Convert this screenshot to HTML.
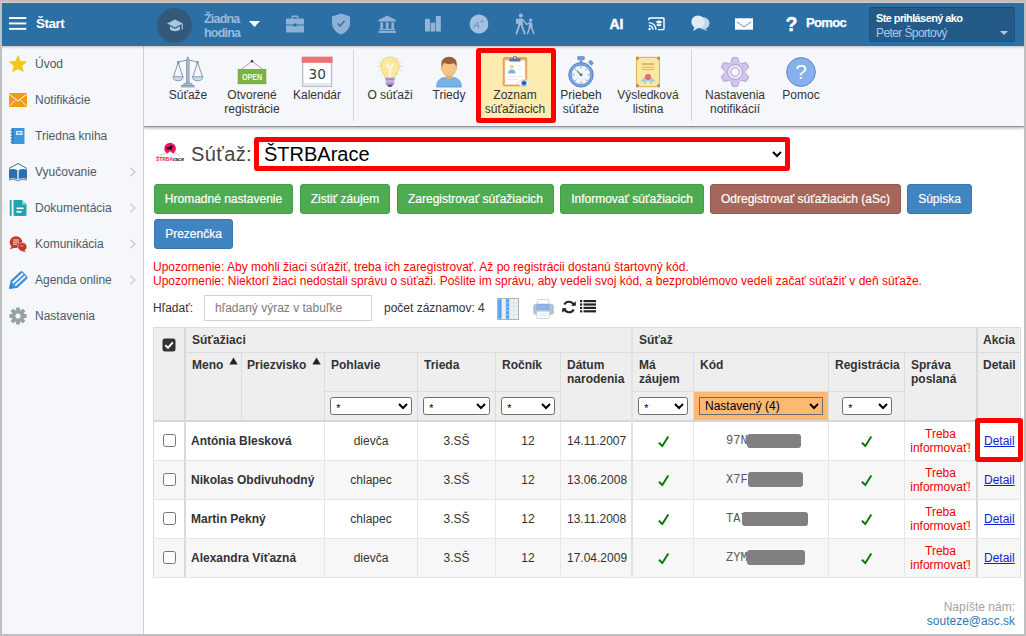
<!DOCTYPE html>
<html lang="sk">
<head>
<meta charset="utf-8">
<title>Zoznam súťažiacich</title>
<style>
*{box-sizing:border-box;margin:0;padding:0}
html,body{width:1026px;height:636px;overflow:hidden;background:#c0c0c0;font-family:"Liberation Sans",sans-serif;font-size:12px;color:#333}
.abs{position:absolute}
#frame{position:absolute;left:2px;top:3px;width:1022px;height:631px;background:#fff;overflow:hidden}
/* coordinates inside #frame are page coords minus (2,3) ; use wrapper to keep page coords */
#pg{position:absolute;left:-2px;top:-3px;width:1026px;height:636px}
#topbar{position:absolute;left:2px;top:3px;width:1022px;height:43px;background:#2c6fa5}
#side{position:absolute;left:2px;top:46px;width:142px;height:588px;background:#f5f7fa;border-right:1px solid #cfd3d8}
#tool{position:absolute;left:144px;top:46px;width:880px;height:81px;background:#f5f7fa;border-bottom:1px solid #8e959c;box-shadow:0 1px 3px rgba(0,0,0,.35);clip-path:inset(0 0 -8px 0)}
.sitem{position:absolute;left:35px;font-size:12px;color:#4f5968;white-space:nowrap;line-height:14px}
.sicon{position:absolute;left:8px;width:20px;height:20px}
.chev{position:absolute;left:129px;width:8px;height:10px}
.tl{position:absolute;text-align:center;font-size:12px;line-height:14px;color:#333;white-space:nowrap;transform:translateX(-50%)}
.ti{position:absolute;width:32px;height:32px;margin-left:-16px}
.tsep{position:absolute;top:50px;width:1px;height:71px;background:#d4d8dc}
.tb{position:absolute;color:#fff;font-weight:bold;white-space:nowrap}

.btn{-webkit-text-stroke:0.200px #fff;position:absolute;height:30px;border-radius:3px;color:#fff;font-size:12px;line-height:28px;text-align:center;white-space:nowrap;border:1px solid #449d48;background:#4eab52}
.btn.b{background:#4084c2;border-color:#3877b3}
.btn.r{background:#a5675b;border-color:#96594e}
.warn{position:absolute;left:153px;color:#f00;font-size:12px;line-height:14px;white-space:nowrap}
.ln{position:absolute;background:#dcdcdc}
.th{position:absolute;font-weight:bold;font-size:12px;line-height:14px;color:#333;white-space:nowrap}
.fs{position:absolute;height:18px;top:397px;font-family:"Liberation Sans",sans-serif;font-size:12px;border:1px solid #6e6e6e;border-radius:2.500px;background:#fff;color:#000;padding:1px 0 0 1px}
.fs.m{font-family:"Liberation Mono",monospace;font-size:11px;padding:4px 0 0 0}
.td{position:absolute;font-size:12px;line-height:14px;color:#333;white-space:nowrap}
.tc{text-align:center;transform:translateX(-50%)}
.cb{position:absolute;left:163px;width:13px;height:13px;border:1px solid #767676;border-radius:2.5px;background:#fff}
.code{position:absolute;left:726px;font-family:"Liberation Mono",monospace;font-size:12px;line-height:14px;color:#5a5a5a}
.red{position:absolute;background:#808080;border-radius:3px}
.ok{position:absolute;width:13px;height:13px}
.det{position:absolute;left:984px;font-size:12px;line-height:14px;color:#0b24d0;text-decoration:underline}
</style>
</head>
<body>
<div style="position:absolute;left:2px;top:2px;width:1022px;height:1px;background:#dcc6ca"></div>
<div id="frame"><div id="pg">

<!-- TOP BAR -->
<div id="topbar"></div>
<svg class="abs" style="left:9px;top:17px" width="18" height="14" viewBox="0 0 18 14"><g fill="#fff"><rect x="0" y="0.100" width="17.300" height="1.900"/><rect x="0" y="5.500" width="17.300" height="1.900"/><rect x="0" y="10.900" width="17.300" height="1.900"/></g></svg>
<div class="tb" style="left:36px;top:16px;font-size:13.500px;line-height:16px;letter-spacing:-0.5px">Štart</div>


<!-- class circle -->
<div class="abs" style="left:157px;top:8px;width:35px;height:35px;border-radius:50%;background:#33587a"></div>
<svg class="abs" style="left:166px;top:19px" width="18" height="14" viewBox="0 0 18 14"><path d="M9 0.5 L17 4.5 L9 8.5 L1 4.5 Z" fill="#a9c6e0"/><path d="M4 7.2 V10.5 C6 12.8 12 12.8 14 10.5 V7.2 L9 9.8 Z" fill="#a9c6e0"/><rect x="15.6" y="5" width="1.2" height="5.5" fill="#a9c6e0"/></svg>
<div class="abs" style="left:204px;top:13px;font-size:12.5px;line-height:13.5px;font-weight:bold;color:#98bbdc;letter-spacing:-0.8px">Žiadna<br>hodina</div>
<svg class="abs" style="left:249px;top:21px" width="11" height="6" viewBox="0 0 11 6"><path d="M0 0 H11 L5.5 6 Z" fill="#fff"/></svg>
<!-- briefcase -->
<svg class="abs" style="left:285px;top:15px" width="20" height="18" viewBox="0 0 20 18"><g fill="#8db2d6"><path d="M6.5 3.5 V1.8 Q6.5 0.5 7.8 0.5 H12.2 Q13.5 0.5 13.5 1.8 V3.5 H12 V2 H8 V3.5 Z"/><path d="M1 4.5 Q1 3.5 2 3.5 H18 Q19 3.5 19 4.5 V9.5 H11.5 V8.5 H8.5 V9.5 H1 Z"/><path d="M1 10.5 H8.5 V11.5 H11.5 V10.5 H19 V16.5 Q19 17.5 18 17.5 H2 Q1 17.5 1 16.5 Z"/></g></svg>
<!-- shield -->
<svg class="abs" style="left:331px;top:13px" width="20" height="22" viewBox="0 0 20 22"><path d="M10 0.5 L19 3.5 V10 C19 15.5 15 19.5 10 21.5 C5 19.5 1 15.5 1 10 V3.5 Z" fill="#8db2d6"/><path d="M6.5 10.5 L9 13 L13.5 8" fill="none" stroke="#2c6fa5" stroke-width="1.4"/></svg>
<!-- bank -->
<svg class="abs" style="left:378px;top:14.500px" width="18.400" height="18.400" viewBox="0 0 20 20"><g fill="#8db2d6"><path d="M10 0.5 L19.5 5.5 V7 H0.5 V5.5 Z"/><rect x="2.5" y="8" width="3" height="7"/><rect x="8.5" y="8" width="3" height="7"/><rect x="14.5" y="8" width="3" height="7"/><rect x="1.5" y="15" width="17" height="1.6"/><rect x="0.5" y="17.3" width="19" height="2.2"/></g></svg>
<!-- bars -->
<svg class="abs" style="left:424px;top:15px" width="18" height="18" viewBox="0 0 18 18"><g fill="#93b6d8"><rect x="1" y="3.900" width="4.900" height="12.600"/><rect x="6.600" y="7.700" width="4.600" height="8.800"/><rect x="11.900" y="1" width="4.900" height="15.500"/></g></svg>
<!-- A+ -->
<svg class="abs" style="left:469px;top:14px" width="20" height="20" viewBox="0 0 20 20"><circle cx="10" cy="10" r="9.4" fill="#a3c1de"/><text x="4.2" y="14" font-family="Liberation Sans, sans-serif" font-size="9.500" font-style="italic" fill="#4c83b6">A</text><text x="11" y="10" font-family="Liberation Sans, sans-serif" font-size="6.500" fill="#4c83b6">+</text></svg>
<!-- walking -->
<svg class="abs" style="left:514px;top:13px" width="22" height="22" viewBox="0 0 22 22"><g fill="#9dbcdb" stroke="#9dbcdb" stroke-linecap="round"><circle cx="6.8" cy="2.6" r="2" stroke="none"/><path d="M4.6 5.5 H8.4 L9 12 H4.2 Z" stroke="none"/><rect x="2" y="5.6" width="2.6" height="5.5" rx="1" stroke="none"/><path d="M5.4 12 L2.5 20.5" stroke-width="1.9" fill="none"/><path d="M7.6 12 L10.6 20.5" stroke-width="1.9" fill="none"/><path d="M8.6 6.5 L12.5 11.3" stroke-width="1.4" fill="none"/><circle cx="16.6" cy="7.2" r="1.6" stroke="none"/><path d="M15 9.5 H18.2 L18.6 14.5 H14.6 Z" stroke="none"/><path d="M15.6 14.5 L13.6 20.5" stroke-width="1.5" fill="none"/><path d="M17.6 14.5 L19.8 20.5" stroke-width="1.5" fill="none"/><path d="M15 10 L12.5 11.5" stroke-width="1.2" fill="none"/></g></svg>
<div class="tb" style="left:609.500px;top:15px;font-size:14px;line-height:18px;letter-spacing:-0.200px;-webkit-text-stroke:0.450px #fff">AI</div>
<!-- cast -->
<svg class="abs" style="left:648px;top:17px" width="17" height="14" viewBox="0 0 17 14"><path d="M0.800 3.300 V1.800 Q0.800 1 1.600 1 H15.200 Q16 1 16 1.800 V11.800 Q16 12.600 15.200 12.600 H10" fill="none" stroke="#fff" stroke-width="1.400"/><g fill="none" stroke="#fff" stroke-width="1.400"><path d="M0.800 5.600 Q7.600 6 7.900 12.800"/><path d="M0.800 8.500 Q4.700 8.900 5 12.800"/></g><circle cx="1.600" cy="12" r="1.200" fill="#fff"/><path d="M11 3.200 L14.600 5 L11 6.800 L7.400 5 Z" fill="#fff"/><path d="M8.800 6.400 V8.400 Q11 10 13.200 8.400 V6.400 L11 7.600 Z" fill="#fff"/></svg>
<!-- chat -->
<svg class="abs" style="left:691px;top:15px" width="19" height="17" viewBox="0 0 19 17"><ellipse cx="12.200" cy="8.300" rx="6.300" ry="6" fill="#c2d6e9"/><path d="M13.500 12.500 L16.800 16.300 L10.500 13.500 Z" fill="#c2d6e9"/><ellipse cx="7" cy="6.800" rx="6.700" ry="6.300" fill="#e2ecf6"/><path d="M3.600 11.500 L2.200 16 L8 12.600 Z" fill="#e2ecf6"/></svg>
<!-- mail -->
<svg class="abs" style="left:735px;top:18px" width="18" height="12" viewBox="0 0 18 12"><rect x="0" y="0.300" width="18" height="11.400" fill="#fff"/><path d="M1.800 3.800 Q5 6 7.500 8 Q9 9.200 10.500 8 Q13 6 16.200 3.800" fill="none" stroke="#3a78ad" stroke-width="0.800"/></svg>
<div class="tb" style="left:785.500px;top:13px;font-size:19.500px;line-height:22px;-webkit-text-stroke:0.450px #fff">?</div>
<div class="tb" style="left:806px;top:15px;font-size:13px;line-height:16px;letter-spacing:-0.650px;-webkit-text-stroke:0.250px #fff">Pomoc</div>
<!-- user box -->
<div class="abs" style="left:869px;top:7px;width:146px;height:35px;border-radius:2px;background:#245a88;border:1px solid #22547f;border-top-color:#1d4871"></div>
<div class="tb" style="left:876px;top:11px;font-size:11px;line-height:14px;letter-spacing:-0.6px">Ste prihlásený ako</div>
<div class="abs" style="left:876px;top:26px;font-size:12px;line-height:15px;color:#a9c8ea;letter-spacing:-0.6px;white-space:nowrap">Peter Športový</div>
<svg class="abs" style="left:1000px;top:31px" width="8" height="4" viewBox="0 0 8 4"><path d="M0 0 H8 L4 4 Z" fill="#b4c7da"/></svg>

<!-- SIDEBAR -->
<div id="side"></div>
<div class="sitem" style="top:57px">Úvod</div>
<div class="sitem" style="top:93px">Notifikácie</div>
<div class="sitem" style="top:129px">Triedna kniha</div>
<div class="sitem" style="top:165px">Vyučovanie</div>
<div class="sitem" style="top:201px">Dokumentácia</div>
<div class="sitem" style="top:237px">Komunikácia</div>
<div class="sitem" style="top:273px">Agenda online</div>
<div class="sitem" style="top:309px">Nastavenia</div>


<svg class="sicon" style="top:54px" viewBox="0 0 20 20"><path d="M10 1 L12.600 7 L19.200 7.600 L14.200 11.900 L15.700 18.300 L10 14.900 L4.300 18.300 L5.800 11.900 L0.800 7.600 L7.400 7 Z" fill="#f5c518"/></svg>
<svg class="sicon" style="top:90px" viewBox="0 0 20 20"><rect x="1" y="3" width="18" height="14" fill="#f39c12"/><path d="M1 4 L10 11 L19 4" fill="none" stroke="#fff" stroke-width="1"/><path d="M1 16.500 L7.500 10 M19 16.500 L12.500 10" fill="none" stroke="#fff" stroke-width="0.800"/></svg>
<svg class="sicon" style="top:126px" viewBox="0 0 20 20"><rect x="4.500" y="2" width="12" height="16" rx="1" fill="#3e97dc"/><rect x="3.500" y="2" width="2" height="16" fill="#2f7fc0"/><g stroke="#2f7fc0" stroke-width="0.800"><path d="M2.500 4.500 H4.500 M2.500 7.500 H4.500 M2.500 10.500 H4.500 M2.500 13.500 H4.500 M2.500 16 H4.500"/></g><rect x="8" y="5" width="6.500" height="4" fill="#d6eafb"/><rect x="9.200" y="6.300" width="4" height="1.200" fill="#3e97dc"/></svg>
<svg class="sicon" style="top:162px" viewBox="0 0 20 20"><path d="M1 6.500 L10 1.500 L19 6.500" fill="none" stroke="#2f6fa8" stroke-width="1"/><path d="M1 7.500 Q6 6 9.300 8.300 V17.500 Q6 15.500 1 16.800 Z" fill="#2f6fa8"/><path d="M19 7.500 Q14 6 10.700 8.300 V17.500 Q14 15.500 19 16.800 Z" fill="#2f6fa8"/><path d="M1 17.800 Q6 16.500 10 18.800 Q14 16.500 19 17.800" fill="none" stroke="#2f6fa8" stroke-width="0.800"/></svg>
<svg class="sicon" style="top:198px" viewBox="0 0 20 20"><rect x="1.800" y="2" width="1.800" height="16" fill="#1fa5b0"/><path d="M5.500 2 H14 L18.500 6.500 V16.500 Q18.500 18 17 18 H7 Q5.500 18 5.500 16.500 Z" fill="#1fa5b0"/><path d="M14 2 V6.500 H18.500 Z" fill="#8fd6dc"/><rect x="8.500" y="9.500" width="7" height="1.600" fill="#fff"/><rect x="8.500" y="13" width="5" height="1.600" fill="#fff"/></svg>
<svg class="sicon" style="top:234px" viewBox="0 0 20 20"><ellipse cx="8" cy="8.200" rx="6.300" ry="5.900" fill="#c0392b"/><path d="M3.800 12 L1.800 15.200 L7.500 13.600 Z" fill="#c0392b"/><ellipse cx="14.300" cy="12.800" rx="4.600" ry="4.200" fill="#c0392b" stroke="#f5f7fa" stroke-width="0.500"/><path d="M15.500 15.500 L18.300 18.300 L12.500 16.800 Z" fill="#c0392b"/><g stroke="#fff" stroke-width="0.900"><path d="M5 6 H11 M5 8.100 H11 M5 10.200 H9"/></g><path d="M12.300 12 H15.500" stroke="#fff" stroke-width="0.600"/></svg>
<svg class="sicon" style="top:270px" viewBox="0 0 20 20"><g transform="translate(1.200 18.700) rotate(-43)"><path d="M0 0 L6.500 -5 H19.500 Q21.500 -5 21.500 -3 V3 Q21.500 5 19.500 5 H6.500 Z" fill="#3f90da"/><path d="M6.500 -1.800 H20.400 M6.500 1.800 H20.400" stroke="#f5f7fa" stroke-width="1.900" fill="none"/><path d="M0 0 L3.400 -2.600 V2.600 Z" fill="#2f7fca"/></g></svg>
<svg class="sicon" style="top:306px" viewBox="0 0 20 20"><g transform="translate(10 10)"><g fill="#95a2a5"><rect id="sg" x="-1.900" y="-8.600" width="3.800" height="4.500" rx="0.600"/><use href="#sg" transform="rotate(45)"/><use href="#sg" transform="rotate(90)"/><use href="#sg" transform="rotate(135)"/><use href="#sg" transform="rotate(180)"/><use href="#sg" transform="rotate(225)"/><use href="#sg" transform="rotate(270)"/><use href="#sg" transform="rotate(315)"/></g><circle r="6.200" fill="#95a2a5"/><circle r="2.600" fill="#f5f7fa"/></g></svg>
<svg class="chev" style="top:167px" viewBox="0 0 8 10"><path d="M1.500 0.800 L6 5 L1.500 9.200" fill="none" stroke="#c3c8ce" stroke-width="1.200"/></svg>
<svg class="chev" style="top:203px" viewBox="0 0 8 10"><path d="M1.500 0.800 L6 5 L1.500 9.200" fill="none" stroke="#c3c8ce" stroke-width="1.200"/></svg>
<svg class="chev" style="top:239px" viewBox="0 0 8 10"><path d="M1.500 0.800 L6 5 L1.500 9.200" fill="none" stroke="#c3c8ce" stroke-width="1.200"/></svg>
<svg class="chev" style="top:275px" viewBox="0 0 8 10"><path d="M1.500 0.800 L6 5 L1.500 9.200" fill="none" stroke="#c3c8ce" stroke-width="1.200"/></svg>

<!-- TOOLBAR -->
<div id="tool"></div>
<div class="abs" style="left:2px;top:46px;width:1022px;height:3px;background:linear-gradient(rgba(0,0,0,.18),rgba(0,0,0,0))"></div>
<!-- selected bg -->
<div class="abs" style="left:476px;top:48px;width:80px;height:75px;border:5px solid #f00;border-radius:3px;background:#fdecb0"></div>
<div class="tsep" style="left:353px"></div>
<div class="tsep" style="left:691px"></div>

<!-- scales -->
<svg class="ti" style="left:188px;top:56px" viewBox="0 0 34 34"><g fill="none" stroke="#7d8fa3" stroke-width="1"><path d="M6.600 6.700 Q16.800 2.300 27.200 6.700"/><path d="M6.600 6.700 L1.600 22 M6.600 6.700 L11.400 22"/><path d="M27.200 6.700 L22.200 22 M27.200 6.700 L32.400 22"/></g><path d="M15.400 4 L16.800 0.800 L18.200 4 L18.100 29 H15.500 Z" fill="#a9bbd0" stroke="#7d8fa3" stroke-width="0.800"/><path d="M11.300 32 Q12 28.800 14.800 28.600 H18.800 Q21.600 28.800 22.300 32 Z" fill="#a9bbd0" stroke="#7d8fa3" stroke-width="0.800"/><rect x="10" y="31.400" width="13.600" height="1.600" fill="#a9bbd0" stroke="#7d8fa3" stroke-width="0.600"/><path d="M1 22 H12 Q11.400 26.300 6.500 26.300 Q1.600 26.300 1 22 Z" fill="#c5def7" stroke="#7d8fa3" stroke-width="0.900"/><path d="M21.600 22 H33 Q32.400 26.300 27.300 26.300 Q22.200 26.300 21.600 22 Z" fill="#c5def7" stroke="#7d8fa3" stroke-width="0.900"/><rect x="5.400" y="5.500" width="2.400" height="2.400" fill="#7d8fa3"/><rect x="26" y="5.500" width="2.400" height="2.400" fill="#7d8fa3"/></svg>
<div class="tl" style="left:188px;top:88px">Súťaže</div>

<!-- open sign -->
<svg class="ti" style="left:252px;top:56px" viewBox="0 0 34 34"><path d="M5.500 14.300 L17 5.500 L28.500 14.300" fill="none" stroke="#b08b7b" stroke-width="0.900"/><circle cx="17" cy="5.500" r="1.300" fill="#333"/><rect x="2.300" y="14.300" width="29.400" height="15.200" fill="#7cb342" stroke="#6a9e35" stroke-width="0.800"/><text x="17" y="25.600" text-anchor="middle" font-family="Liberation Sans, sans-serif" font-size="9.600" font-weight="bold" fill="#f4faea" textLength="21.500" lengthAdjust="spacingAndGlyphs">OPEN</text></svg>
<div class="tl" style="left:252px;top:88px">Otvorené<br>registrácie</div>

<!-- calendar -->
<svg class="ti" style="left:317px;top:56px" viewBox="0 0 34 34"><rect x="1.800" y="1.800" width="30.600" height="30.400" fill="#fff" stroke="#b4c0cc" stroke-width="1.500"/><rect x="1" y="1" width="32.200" height="6.200" fill="#ef6f73" stroke="#dd8a8c" stroke-width="0.600"/><rect x="2.500" y="28.800" width="29.200" height="2.800" fill="#dfe8f0"/><text x="17.200" y="24.200" text-anchor="middle" font-family="DejaVu Sans, Liberation Sans, sans-serif" font-size="14.500" fill="#2f3e50">30</text></svg>
<div class="tl" style="left:317px;top:88px">Kalendár</div>

<!-- bulb -->
<svg class="ti" style="left:390px;top:56px" viewBox="0 0 34 34"><g stroke="#e3c662" stroke-width="1" stroke-dasharray="1.200 1.100" fill="none"><path d="M8.500 2 L10 4"/><path d="M25.500 2 L24 4"/><path d="M4.800 6 L7 7.200"/><path d="M29.200 6 L27 7.200"/><path d="M3.500 10.800 H6.300"/><path d="M27.700 10.800 H30.500"/><path d="M4.800 15.800 L7 14.800"/><path d="M29.200 15.800 L27 14.800"/><path d="M8 20.200 L9.300 18.800"/><path d="M26 20.200 L24.700 18.800"/></g><path d="M17 1.200 C10.300 1.200 7.200 6 7.200 10.500 C7.200 15.500 10.800 18.500 12 23.200 H22 C23.200 18.500 26.800 15.500 26.800 10.500 C26.800 6 23.700 1.200 17 1.200 Z" fill="#fbe89c" stroke="#e3c662" stroke-width="0.800"/><path d="M12.800 8.200 Q14.800 7 17 10.600 Q19.200 7 21.200 8.200 Q21.800 10.800 18.400 12.800 V22.800 H15.600 V12.800 Q12.200 10.800 12.800 8.200 Z" fill="#fdf6d3"/><rect x="12" y="23.200" width="10" height="2.600" fill="#a693cc"/><rect x="12.300" y="25.800" width="9.400" height="2.400" fill="#bbabdb"/><rect x="12.600" y="28.200" width="8.800" height="2.400" fill="#a693cc"/><path d="M13.800 30.600 H20.200 Q19.600 33 17 33 Q14.400 33 13.800 30.600 Z" fill="#4e4a60"/></svg>
<div class="tl" style="left:390px;top:88px">O súťaži</div>

<!-- person -->
<svg class="ti" style="left:449px;top:56px" viewBox="0 0 34 34"><path d="M3.800 33 Q4 24.500 11.500 22.800 L17 24.200 L22.500 22.800 Q30 24.500 30.200 33 Z" fill="#75b2ea" stroke="#5a9ad8" stroke-width="0.800"/><path d="M13.400 19 H20.600 V23 Q17 26.300 13.400 23 Z" fill="#e6ae68"/><ellipse cx="17" cy="13.200" rx="7.300" ry="8.600" fill="#f5c585" stroke="#d9a562" stroke-width="0.600"/><circle cx="9.600" cy="14" r="1.500" fill="#f5c585"/><circle cx="24.400" cy="14" r="1.500" fill="#f5c585"/><path d="M9.300 13 Q6.800 1.500 17 0.800 Q27.500 1.500 24.700 13 Q24.300 8.800 22 7.800 Q16.500 9.800 11.800 7.200 Q9.800 9 9.300 13 Z" fill="#9a5f40"/></svg>
<div class="tl" style="left:449px;top:88px">Triedy</div>

<!-- clipboard + eye -->
<svg class="ti" style="left:516px;top:55px;width:34px;height:34px;margin-left:-17px" viewBox="0 0 34 34"><rect x="4.200" y="2.600" width="23.500" height="28.300" rx="1.500" fill="#eaa868" stroke="#cf9152" stroke-width="0.700"/><rect x="6" y="5.200" width="20" height="24.200" fill="#fff" stroke="#ecdcc8" stroke-width="0.500"/><path d="M10.400 6.600 V3.400 H13.400 Q13.900 0.700 15.900 0.700 Q17.900 0.700 18.400 3.400 H21.400 V6.600 Z" fill="#5d7596"/><circle cx="15.900" cy="2.800" r="1" fill="#e4ebf3"/><circle cx="12.700" cy="11.800" r="2" fill="#f2d27e"/><path d="M9 18.600 Q9 14.400 12.700 14.400 Q16.500 14.400 16.500 18.600 Z" fill="#78b4ea"/><g stroke="#e3e8ee" stroke-width="0.900"><path d="M18.500 11 H24"/><path d="M18.500 14 H24"/><path d="M8.500 21.500 H24"/><path d="M8.500 24.500 H19"/></g><path d="M18.100 28.200 Q25 20.600 31.600 28.200 Q25 35 18.100 28.200 Z" fill="#fff" stroke="#dccfae" stroke-width="0.700"/><circle cx="25" cy="28.100" r="2.900" fill="#5b96db"/><circle cx="25" cy="28.100" r="1.400" fill="#23446e"/></svg>
<div class="tl" style="left:515px;top:88px">Zoznam<br>súťažiacich</div>

<!-- stopwatch -->
<svg class="ti" style="left:581px;top:56px" viewBox="0 0 34 34"><rect x="13.400" y="0.600" width="7.200" height="3.400" rx="0.700" fill="#6f9bdc" stroke="#4f7dbd" stroke-width="0.600"/><rect x="15.600" y="3.800" width="2.800" height="2.800" fill="#6f9bdc"/><rect x="25.300" y="5.400" width="4.600" height="3.400" rx="0.700" transform="rotate(45 27.600 7.100)" fill="#6f9bdc" stroke="#4f7dbd" stroke-width="0.500"/><circle cx="17" cy="20" r="13" fill="#79a7e3" stroke="#4f7dbd" stroke-width="1"/><circle cx="17" cy="20" r="10.300" fill="#eef4fb" stroke="#4f7dbd" stroke-width="0.700"/><g stroke="#6d7f95" stroke-width="0.900"><path d="M17 10.800 V13"/><path d="M17 27 V29.200"/><path d="M7.800 20 H10"/><path d="M24 20 H26.200"/><path d="M10.500 13.500 L12 15"/><path d="M23.500 13.500 L22 15"/><path d="M10.500 26.500 L12 25"/><path d="M23.500 26.500 L22 25"/></g><path d="M17 20 L12.600 15.600" stroke="#5b6b80" stroke-width="1.100" fill="none"/><circle cx="17" cy="20" r="1.500" fill="#4f6a92"/></svg>
<div class="tl" style="left:581px;top:88px">Priebeh<br>súťaže</div>

<!-- certificate -->
<svg class="ti" style="left:648px;top:56px" viewBox="0 0 34 34"><rect x="4.800" y="1.400" width="24.400" height="31.200" fill="#fbe8a0" stroke="#d6ab4e" stroke-width="1"/><g fill="#b98d3a"><rect x="4.300" y="0.900" width="3" height="3"/><rect x="26.700" y="0.900" width="3" height="3"/><rect x="4.300" y="30.100" width="3" height="3"/><rect x="26.700" y="30.100" width="3" height="3"/></g><g stroke="#d4ab52"><path d="M10.500 8.500 H23.500" stroke-width="1.600"/><path d="M10.500 12 H23.500" stroke-width="0.900"/><path d="M10.500 14.400 H23.500" stroke-width="0.900"/></g><path d="M14.500 22.500 L9.800 26.200 L12.800 26.800 L13.500 29.600 L17.200 24.500 Z" fill="#a6d0f0" stroke="#7fb3e0" stroke-width="0.500"/><path d="M19.500 22.500 L24.200 26.200 L21.200 26.800 L20.500 29.600 L16.800 24.500 Z" fill="#a6d0f0" stroke="#7fb3e0" stroke-width="0.500"/><circle cx="17" cy="22.300" r="3" fill="#ea6a6e" stroke="#d65a5e" stroke-width="0.500"/></svg>
<div class="tl" style="left:648px;top:88px">Výsledková<br>listina</div>

<!-- gear -->
<svg class="ti" style="left:735px;top:56px" viewBox="0 0 34 34"><g transform="translate(17 17)"><g fill="#cfc5ea" stroke="#a898d2" stroke-width="0.900"><path id="gt" d="M-3 -14.700 Q-3.200 -15.300 -2.400 -15.300 H2.400 Q3.200 -15.300 3 -14.700 L4.600 -9.500 H-4.600 Z"/><use href="#gt" transform="rotate(60)"/><use href="#gt" transform="rotate(120)"/><use href="#gt" transform="rotate(180)"/><use href="#gt" transform="rotate(240)"/><use href="#gt" transform="rotate(300)"/></g><circle r="11.200" fill="#cfc5ea"/><circle r="8" fill="#ece7f8" stroke="#9f8fcc" stroke-width="0.800"/><circle r="4.400" fill="#fafafd" stroke="#9f8fcc" stroke-width="0.900"/></g></svg>
<div class="tl" style="left:735px;top:88px">Nastavenia<br>notifikácií</div>

<!-- help -->
<svg class="ti" style="left:801px;top:56px" viewBox="0 0 34 34"><circle cx="17" cy="17" r="15.300" fill="#86afeb" stroke="#5a88cf" stroke-width="1"/><text x="17" y="24.500" text-anchor="middle" font-family="Liberation Sans, sans-serif" font-size="22" fill="#fff">?</text></svg>
<div class="tl" style="left:801px;top:88px">Pomoc</div>


<!-- CONTENT -->
<svg class="abs" style="left:155px;top:142px" width="31" height="20" viewBox="0 0 31 20"><circle cx="15.100" cy="6.500" r="5.800" fill="#e9165f"/><path transform="translate(0 0.700)" d="M11.200 5.800 L13 4.200 L14 5 L15 3.400 L15.200 1.600 L15.600 3.600 L18.200 3 L16.800 5.600 L16 8 L15.200 6.400 L13 6.800 L12 6.200 Z" fill="#111"/><path transform="translate(0 0.600)" d="M3.500 14.500 L9 10.800 L11.500 11.300 L15.200 8.600 L18 11 L20.800 10.200 L25.500 14.500 Z" fill="#fff"/><path transform="translate(0 0.600)" d="M4.500 13.600 L9 10.800 L11.500 11.300 L15.200 8.600 L18 11 L20.800 10.200 L24.500 13.600" fill="none" stroke="#9a9a9a" stroke-width="0.500"/><text x="1" y="18.600" font-family="Liberation Sans, sans-serif" font-size="6.200" font-weight="bold" fill="#e9165f" textLength="17" lengthAdjust="spacingAndGlyphs">ŠTRBA</text><text x="18" y="18.600" font-family="Liberation Sans, sans-serif" font-size="6.200" font-weight="bold" font-style="italic" fill="#1a1a1a" textLength="11" lengthAdjust="spacingAndGlyphs">race</text></svg>
<div class="abs" style="left:191px;top:142px;font-size:20px;line-height:24px;color:#444;white-space:nowrap;letter-spacing:0.4px">Súťaž:</div>
<select class="abs" style="left:254px;top:137px;width:536px;height:34px;border:5px solid #f00;border-radius:3px;font-family:'Liberation Sans',sans-serif;font-size:20px;color:#000;background:#fff;padding:0 0 0 1px"><option>ŠTRBArace</option></select>

<div class="btn " style="left:154px;top:184px;width:139px">Hromadné nastavenie</div>
<div class="btn " style="left:300px;top:184px;width:90px">Zistiť záujem</div>
<div class="btn " style="left:397px;top:184px;width:157px">Zaregistrovať súťažiacich</div>
<div class="btn " style="left:560px;top:184px;width:144px">Informovať súťažiacich</div>
<div class="btn r" style="left:710px;top:184px;width:191px">Odregistrovať súťažiacich (aSc)</div>
<div class="btn b" style="left:907px;top:184px;width:65px">Súpiska</div>
<div class="btn b" style="left:154px;top:219px;width:79px">Prezenčka</div>
<div class="warn" style="top:260px">Upozornenie: Aby mohli žiaci súťažiť, treba ich zaregistrovať. Až po registrácii dostanú štartovný kód.</div>
<div class="warn" style="top:274px">Upozornenie: Niektorí žiaci nedostali správu o súťaži. Pošlite im správu, aby vedeli svoj kód, a bezproblémovo vedeli začať súťažiť v deň súťaže.</div>
<div class="td" style="left:153px;top:301px">Hľadať:</div>
<div class="abs" style="left:204px;top:295px;width:168px;height:26px;border:1px solid #d0d0d0;background:#fff"></div>
<div class="td" style="left:215px;top:301px;color:#7b7b7b">hľadaný výraz v tabuľke</div>
<div class="td" style="left:384px;top:301px">počet záznamov: 4</div>
<svg class="abs" style="left:497px;top:298px" width="22" height="22" viewBox="0 0 22 22"><rect x="0.500" y="0.500" width="21" height="21" fill="#eef1f4" stroke="#aab3bc"/><rect x="1.200" y="1.200" width="3.400" height="19.600" fill="#4da3f7"/><rect x="9" y="1.200" width="3.200" height="19.600" fill="#4da3f7"/><g stroke="#d5dbe1" stroke-width="0.700"><path d="M8.300 1 V21 M12.800 1 V21 M16.800 1 V21"/><path d="M4.600 4.800 H21 M4.600 8.800 H21 M4.600 12.800 H21 M4.600 16.800 H21"/></g></svg>
<svg class="abs" style="left:533px;top:299px" width="21" height="20" viewBox="0 0 21 20"><rect x="4.300" y="0.600" width="11.400" height="6" rx="0.800" fill="#fff" stroke="#c3ccd6" stroke-width="0.800"/><rect x="0.600" y="5.200" width="19.800" height="10.300" rx="2.200" fill="#b3c3d8" stroke="#9fb1c8" stroke-width="0.600"/><rect x="4" y="5.200" width="12" height="5" fill="#8fb3ea" stroke="#7a9fd8" stroke-width="0.500"/><rect x="17.300" y="7" width="1" height="1.500" fill="#e8d98a"/><rect x="3.800" y="12.200" width="12.400" height="7.300" rx="0.800" fill="#fff" stroke="#c3ccd6" stroke-width="0.800"/><path d="M6 15 H14 M6 17 H14" stroke="#d9dee4" stroke-width="0.800"/></svg>
<svg class="abs" style="left:562px;top:300px" width="14" height="14" viewBox="0 0 14 14"><g fill="none" stroke="#222" stroke-width="2.100"><path d="M12 5.300 A5.300 5.300 0 0 0 2.300 4.600"/><path d="M2 8.700 A5.300 5.300 0 0 0 11.700 9.400"/></g><path d="M9.200 5.800 H13.800 V1.200 Z" fill="#222"/><path d="M4.800 8.200 H0.200 V12.800 Z" fill="#222"/></svg>
<svg class="abs" style="left:580px;top:300px" width="16" height="13" viewBox="0 0 16 13"><g fill="#222"><rect x="0" y="0" width="2.200" height="2.200"/><rect x="3.500" y="0" width="12.500" height="2.200"/><rect x="0" y="3.400" width="2.200" height="2.200"/><rect x="3.500" y="3.400" width="12.500" height="2.200"/><rect x="0" y="6.800" width="2.200" height="2.200"/><rect x="3.500" y="6.800" width="12.500" height="2.200"/><rect x="0" y="10.200" width="2.200" height="2.200"/><rect x="3.500" y="10.200" width="12.500" height="2.200"/></g></svg>

<div class="abs" style="left:153px;top:327px;width:868px;height:94px;background:#eee"></div>
<div class="abs" style="left:153px;top:421px;width:868px;height:39px;background:#fff"></div>
<div class="abs" style="left:153px;top:460px;width:868px;height:39px;background:#f7f7f7"></div>
<div class="abs" style="left:153px;top:499px;width:868px;height:39px;background:#fff"></div>
<div class="abs" style="left:153px;top:538px;width:868px;height:39px;background:#f7f7f7"></div>
<div class="abs" style="left:694px;top:392px;width:134px;height:28px;background:#fdb872"></div>
<div class="ln" style="left:153px;top:327px;width:868px;height:1px;background:#dcdcdc"></div>
<div class="ln" style="left:153px;top:327px;width:1px;height:251px;background:#dcdcdc"></div>
<div class="ln" style="left:1020px;top:327px;width:1px;height:251px;background:#dcdcdc"></div>
<div class="ln" style="left:186px;top:352px;width:835px;height:1px;background:#dcdcdc"></div>
<div class="ln" style="left:325px;top:391px;width:235px;height:1px;background:#dcdcdc"></div>
<div class="ln" style="left:633px;top:391px;width:271px;height:1px;background:#dcdcdc"></div>
<div class="ln" style="left:153px;top:420px;width:868px;height:2px;background:#d6d6d6"></div>
<div class="ln" style="left:184px;top:327px;width:2px;height:251px;background:#d9d9d9"></div>
<div class="ln" style="left:241px;top:353px;width:1px;height:67px;background:#dcdcdc"></div>
<div class="ln" style="left:324px;top:353px;width:1px;height:67px;background:#dcdcdc"></div>
<div class="ln" style="left:417px;top:353px;width:1px;height:67px;background:#dcdcdc"></div>
<div class="ln" style="left:495px;top:353px;width:1px;height:67px;background:#dcdcdc"></div>
<div class="ln" style="left:560px;top:353px;width:1px;height:67px;background:#dcdcdc"></div>
<div class="ln" style="left:631px;top:327px;width:2px;height:251px;background:#e2e2e2"></div>
<div class="ln" style="left:693px;top:353px;width:1px;height:67px;background:#dcdcdc"></div>
<div class="ln" style="left:828px;top:353px;width:1px;height:67px;background:#dcdcdc"></div>
<div class="ln" style="left:904px;top:353px;width:1px;height:67px;background:#dcdcdc"></div>
<div class="ln" style="left:976px;top:327px;width:2px;height:251px;background:#d9d9d9"></div>
<div class="ln" style="left:324px;top:422px;width:1px;height:156px;background:#e6e6e6"></div>
<div class="ln" style="left:417px;top:422px;width:1px;height:156px;background:#e6e6e6"></div>
<div class="ln" style="left:495px;top:422px;width:1px;height:156px;background:#e6e6e6"></div>
<div class="ln" style="left:560px;top:422px;width:1px;height:156px;background:#e6e6e6"></div>
<div class="ln" style="left:693px;top:422px;width:1px;height:156px;background:#e6e6e6"></div>
<div class="ln" style="left:828px;top:422px;width:1px;height:156px;background:#e6e6e6"></div>
<div class="ln" style="left:904px;top:422px;width:1px;height:156px;background:#e6e6e6"></div>
<div class="ln" style="left:153px;top:460px;width:868px;height:1px;background:#e6e6e6"></div>
<div class="ln" style="left:153px;top:499px;width:868px;height:1px;background:#e6e6e6"></div>
<div class="ln" style="left:153px;top:538px;width:868px;height:1px;background:#e6e6e6"></div>
<div class="ln" style="left:153px;top:577px;width:868px;height:1px;background:#e6e6e6"></div>
<div class="th" style="left:192px;top:333px">Súťažiaci</div>
<div class="th" style="left:639px;top:333px">Súťaž</div>
<div class="th" style="left:983px;top:333px">Akcia</div>
<div class="th" style="left:192px;top:358px">Meno</div>
<div class="th" style="left:247px;top:358px">Priezvisko</div>
<svg class="abs" style="left:229px;top:357px" width="9" height="8" viewBox="0 0 9 8"><path d="M4.500 0.500 L8.700 7.500 H0.300 Z" fill="#222"/></svg>
<svg class="abs" style="left:312px;top:357px" width="9" height="8" viewBox="0 0 9 8"><path d="M4.500 0.500 L8.700 7.500 H0.300 Z" fill="#222"/></svg>
<div class="th" style="left:331px;top:358px">Pohlavie</div>
<div class="th" style="left:424px;top:358px">Trieda</div>
<div class="th" style="left:502px;top:358px">Ročník</div>
<div class="th" style="left:567px;top:358px">Dátum<br>narodenia</div>
<div class="th" style="left:639px;top:358px">Má<br>záujem</div>
<div class="th" style="left:700px;top:358px">Kód</div>
<div class="th" style="left:835px;top:358px">Registrácia</div>
<div class="th" style="left:911px;top:358px">Správa<br>poslaná</div>
<div class="th" style="left:983px;top:358px">Detail</div>
<svg class="abs" style="left:162px;top:338px" width="14" height="14" viewBox="0 0 14 14"><rect x="0.500" y="0.500" width="13" height="13" rx="2.500" fill="#333"/><path d="M3.300 7.200 L6 9.800 L10.800 4.300" fill="none" stroke="#fff" stroke-width="2"/></svg>
<select class="fs m" style="left:330px;width:82px"><option>*</option></select>
<select class="fs m" style="left:423px;width:67px"><option>*</option></select>
<select class="fs m" style="left:501px;width:54px"><option>*</option></select>
<select class="fs m" style="left:638px;width:50px"><option>*</option></select>
<select class="fs m" style="left:842px;width:50px"><option>*</option></select>
<select class="fs" style="left:699px;width:124px;background:#fdb872;border-radius:0;border-color:#6a6a6a;padding-top:0"><option>Nastavený (4)</option></select>
<div class="cb" style="top:434px"></div>
<div class="td" style="left:191px;top:434px;font-weight:bold">Antónia Blesková</div>
<div class="td tc" style="left:371px;top:434px">dievča</div>
<div class="td tc" style="left:456.500px;top:434px">3.SŠ</div>
<div class="td tc" style="left:528px;top:434px">12</div>
<div class="td" style="left:567px;top:434px">14.11.2007</div>
<svg class="ok" style="left:657px;top:435px" viewBox="0 0 13 13"><path d="M1.900 7.700 L5.300 11 L11.300 1.400" fill="none" stroke="#007a00" stroke-width="1.900"/></svg>
<div class="code" style="top:434px">97N</div>
<div class="red" style="left:747px;top:434px;width:54px;height:14px"></div>
<svg class="ok" style="left:860px;top:435px" viewBox="0 0 13 13"><path d="M1.900 7.700 L5.300 11 L11.300 1.400" fill="none" stroke="#007a00" stroke-width="1.900"/></svg>
<div class="td tc" style="left:940.500px;top:427px;color:#e00">Treba<br>informovať!</div>
<div class="det" style="top:434px">Detail</div>
<div class="cb" style="top:473px"></div>
<div class="td" style="left:191px;top:473px;font-weight:bold">Nikolas Obdivuhodný</div>
<div class="td tc" style="left:371px;top:473px">chlapec</div>
<div class="td tc" style="left:456.500px;top:473px">3.SŠ</div>
<div class="td tc" style="left:528px;top:473px">12</div>
<div class="td" style="left:567px;top:473px">13.06.2008</div>
<svg class="ok" style="left:657px;top:474px" viewBox="0 0 13 13"><path d="M1.900 7.700 L5.300 11 L11.300 1.400" fill="none" stroke="#007a00" stroke-width="1.900"/></svg>
<div class="code" style="top:473px">X7F</div>
<div class="red" style="left:748px;top:472px;width:55px;height:15px"></div>
<svg class="ok" style="left:860px;top:474px" viewBox="0 0 13 13"><path d="M1.900 7.700 L5.300 11 L11.300 1.400" fill="none" stroke="#007a00" stroke-width="1.900"/></svg>
<div class="td tc" style="left:940.500px;top:466px;color:#e00">Treba<br>informovať!</div>
<div class="det" style="top:473px">Detail</div>
<div class="cb" style="top:512px"></div>
<div class="td" style="left:191px;top:512px;font-weight:bold">Martin Pekný</div>
<div class="td tc" style="left:371px;top:512px">chlapec</div>
<div class="td tc" style="left:456.500px;top:512px">3.SŠ</div>
<div class="td tc" style="left:528px;top:512px">12</div>
<div class="td" style="left:567px;top:512px">13.11.2008</div>
<svg class="ok" style="left:657px;top:513px" viewBox="0 0 13 13"><path d="M1.900 7.700 L5.300 11 L11.300 1.400" fill="none" stroke="#007a00" stroke-width="1.900"/></svg>
<div class="code" style="top:512px">TA7</div>
<div class="red" style="left:742px;top:512px;width:66px;height:14px"></div>
<svg class="ok" style="left:860px;top:513px" viewBox="0 0 13 13"><path d="M1.900 7.700 L5.300 11 L11.300 1.400" fill="none" stroke="#007a00" stroke-width="1.900"/></svg>
<div class="td tc" style="left:940.500px;top:505px;color:#e00">Treba<br>informovať!</div>
<div class="det" style="top:512px">Detail</div>
<div class="cb" style="top:551px"></div>
<div class="td" style="left:191px;top:551px;font-weight:bold">Alexandra Víťazná</div>
<div class="td tc" style="left:371px;top:551px">dievča</div>
<div class="td tc" style="left:456.500px;top:551px">3.SŠ</div>
<div class="td tc" style="left:528px;top:551px">12</div>
<div class="td" style="left:567px;top:551px">17.04.2009</div>
<svg class="ok" style="left:657px;top:552px" viewBox="0 0 13 13"><path d="M1.900 7.700 L5.300 11 L11.300 1.400" fill="none" stroke="#007a00" stroke-width="1.900"/></svg>
<div class="code" style="top:551px">ZYM</div>
<div class="red" style="left:747px;top:550px;width:58px;height:15px"></div>
<svg class="ok" style="left:860px;top:552px" viewBox="0 0 13 13"><path d="M1.900 7.700 L5.300 11 L11.300 1.400" fill="none" stroke="#007a00" stroke-width="1.900"/></svg>
<div class="td tc" style="left:940.500px;top:544px;color:#e00">Treba<br>informovať!</div>
<div class="det" style="top:551px">Detail</div>
<div class="abs" style="left:975px;top:418px;width:48px;height:44px;border:5px solid #f00;border-radius:3px"></div>
<div class="abs" style="right:11px;top:600px;text-align:right;font-size:12px;line-height:14px;white-space:nowrap"><span style="color:#a3a3a3">Napíšte nám:</span><br><span style="color:#2a78b5">souteze@asc.sk</span></div>
</div></div>
</body>
</html>
